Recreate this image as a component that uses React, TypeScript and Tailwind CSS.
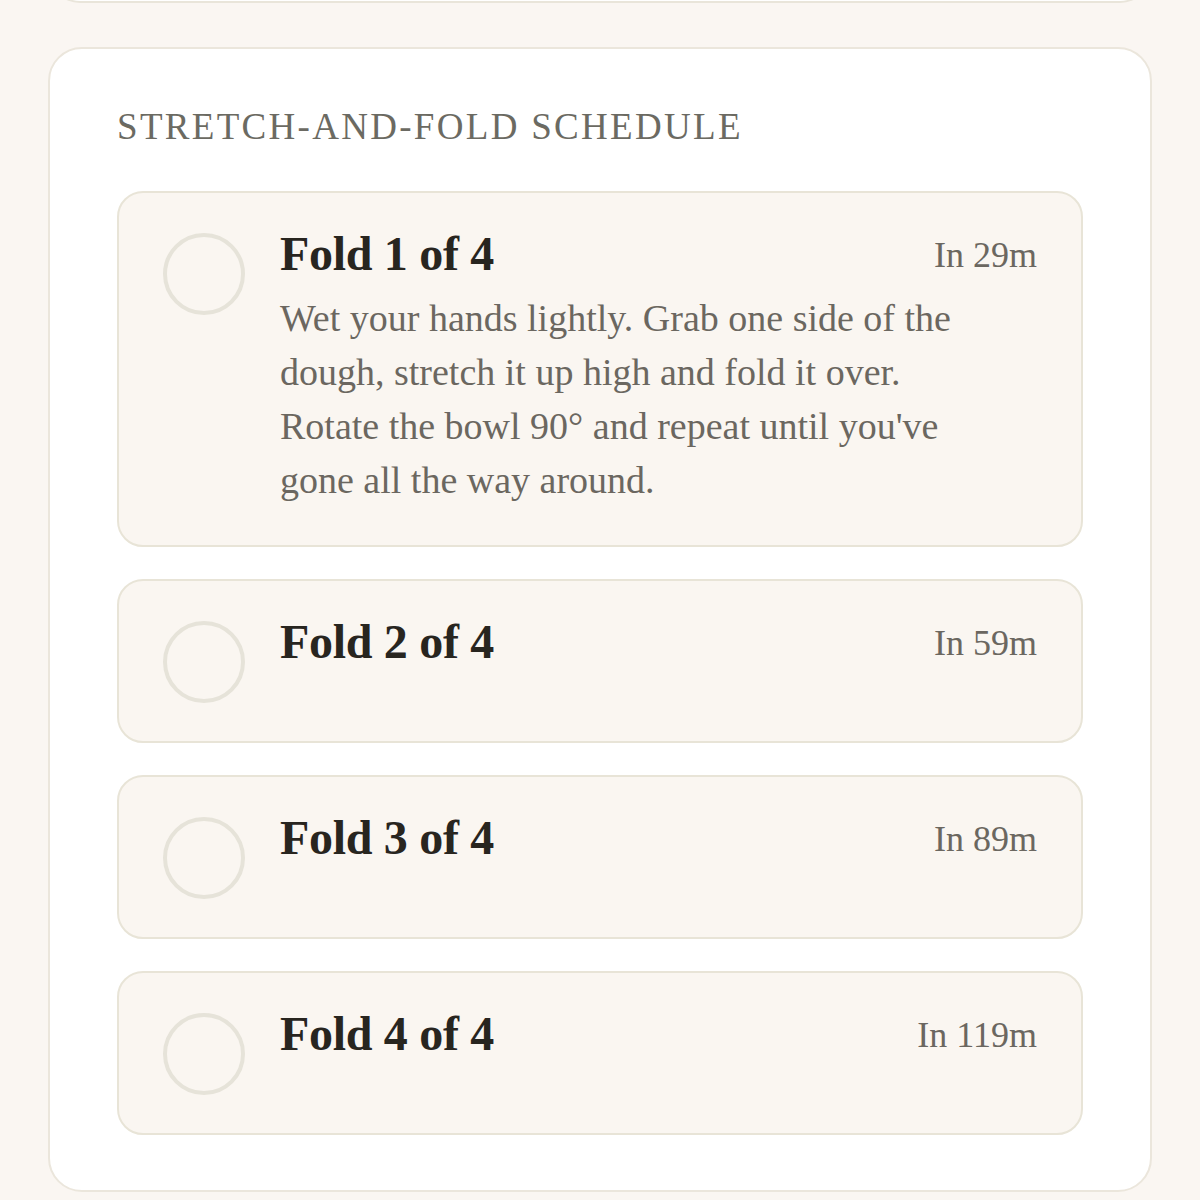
const FOLDS = [
  {
    title: 'Fold 1 of 4',
    eta: 'In 29m',
    body: "Wet your hands lightly. Grab one side of the dough, stretch it up high and fold it over. Rotate the bowl 90° and repeat until you've gone all the way around.",
  },
  { title: 'Fold 2 of 4', eta: 'In 59m' },
  { title: 'Fold 3 of 4', eta: 'In 89m' },
  { title: 'Fold 4 of 4', eta: 'In 119m' },
]

type Fold = (typeof FOLDS)[number] & { body?: string }

function FoldCard({ fold }: { fold: Fold }) {
  return (
    <div className="flex gap-[35px] rounded-[26px] border-2 border-[#e8e4d7] bg-[#faf6f1] pt-[36px] pr-[44px] pb-[38px] pl-[44px]">
      <div className="mt-[4px] h-[82px] w-[82px] shrink-0 rounded-full border-4 border-[#e6e3d9]" />
      <div className="min-w-0 flex-1">
        <div className="flex items-start justify-between">
          <h3 className="text-[48px] leading-[50px] font-bold tracking-[-0.3px] text-[#28251f]">
            {fold.title}
          </h3>
          <span className="pt-[6px] text-[36px] leading-[40px] text-[#6b6760]">
            {fold.eta}
          </span>
        </div>
        {fold.body && (
          <p className="mt-[12px] max-w-[700px] text-[38px] leading-[54px] text-[#6b6760]">
            {fold.body}
          </p>
        )}
      </div>
    </div>
  )
}

export default function App() {
  return (
    <div className="min-h-[1200px] overflow-hidden bg-[#faf6f2] px-[48px] font-['Liberation_Serif',serif]">
      <div className="-mt-[30px] h-[33px] rounded-b-[32px] border-2 border-[#e9e5da] bg-white" />
      <section className="mt-[44px] rounded-[34px] border-2 border-[#ebe6dc] bg-white px-[67px] pt-[53px] pb-[55px]">
        <h2 className="text-[37px] leading-[50px] tracking-[2.3px] text-[#6b6a62]">
          STRETCH-AND-FOLD SCHEDULE
        </h2>
        <div className="mt-[39px] flex flex-col gap-[32px]">
          {FOLDS.map((fold) => (
            <FoldCard key={fold.title} fold={fold} />
          ))}
        </div>
      </section>
    </div>
  )
}
